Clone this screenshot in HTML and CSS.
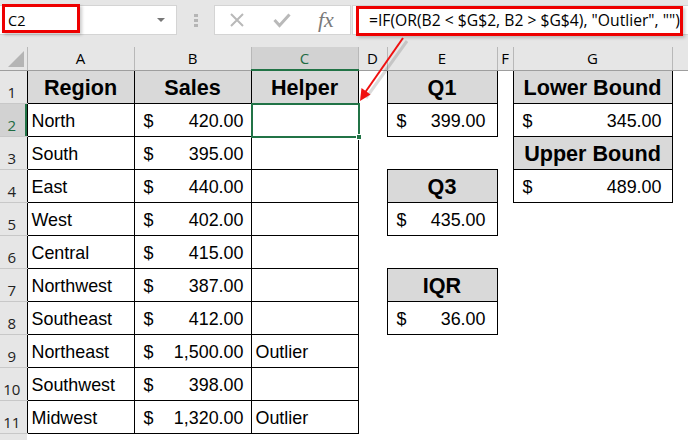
FILE: index.html
```html
<!DOCTYPE html>
<html lang="en">
<head>
<meta charset="utf-8">
<title>Outlier helper column</title>
<link rel="stylesheet" href="styles.css">
</head>
<body>
<div class="app">
  <div class="bar">
    <div class="namebox"><span class="name">C2</span><span class="caret"></span><span class="red red-name"></span></div>
    <div class="dots"><i></i><i></i><i></i></div>
    <div class="fxbox">
      <svg class="ic" width="16" height="16" viewBox="0 0 16 16"><path d="M2 2 L14 14 M14 2 L2 14" stroke="#b9b9b9" stroke-width="2" fill="none"/></svg>
      <svg class="ic" width="18" height="16" viewBox="0 0 18 16"><path d="M1.500 8 L6.500 13.500 L16.500 2.500" stroke="#b9b9b9" stroke-width="3" fill="none"/></svg>
      <span class="fx">fx</span>
    </div>
    <div class="formula"><span class="ftext">=IF(OR(B2 &lt; $G$2, B2 &gt; $G$4), "Outlier", "")</span><span class="red red-formula"></span></div>
  </div>
  <table class="sheet">
    <colgroup><col class="w-r"><col class="w-a"><col class="w-b"><col class="w-c"><col class="w-d"><col class="w-e"><col class="w-f"><col class="w-g"><col></colgroup>
    <thead>
      <tr class="chead"><th class="corner"><span class="tri"></span></th><th>A</th><th>B</th><th class="active">C</th><th>D</th><th>E</th><th>F</th><th>G</th><th></th></tr>
    </thead>
    <tbody>
      <tr><th class="rh">1</th><td class="hd">Region</td><td class="hd">Sales</td><td class="hd">Helper</td><td></td><td class="hd">Q1</td><td></td><td class="hd">Lower Bound</td><td></td></tr>
      <tr><th class="rh on">2</th><td class="tx">North</td><td class="tx m-b"><span class="money"><span>$</span><span>420.00</span></span></td><td class="tx sel-cell"><span class="sel"><span class="handle"></span></span></td><td></td><td class="tx m-e"><span class="money"><span>$</span><span>399.00</span></span></td><td></td><td class="tx m-g"><span class="money"><span>$</span><span>345.00</span></span></td><td></td></tr>
      <tr><th class="rh">3</th><td class="tx">South</td><td class="tx m-b"><span class="money"><span>$</span><span>395.00</span></span></td><td class="tx"></td><td></td><td></td><td></td><td class="hd">Upper Bound</td><td></td></tr>
      <tr><th class="rh">4</th><td class="tx">East</td><td class="tx m-b"><span class="money"><span>$</span><span>440.00</span></span></td><td class="tx"></td><td></td><td class="hd">Q3</td><td></td><td class="tx m-g"><span class="money"><span>$</span><span>489.00</span></span></td><td></td></tr>
      <tr><th class="rh">5</th><td class="tx">West</td><td class="tx m-b"><span class="money"><span>$</span><span>402.00</span></span></td><td class="tx"></td><td></td><td class="tx m-e"><span class="money"><span>$</span><span>435.00</span></span></td><td></td><td></td><td></td></tr>
      <tr><th class="rh">6</th><td class="tx">Central</td><td class="tx m-b"><span class="money"><span>$</span><span>415.00</span></span></td><td class="tx"></td><td></td><td></td><td></td><td></td><td></td></tr>
      <tr><th class="rh">7</th><td class="tx">Northwest</td><td class="tx m-b"><span class="money"><span>$</span><span>387.00</span></span></td><td class="tx"></td><td></td><td class="hd">IQR</td><td></td><td></td><td></td></tr>
      <tr><th class="rh">8</th><td class="tx">Southeast</td><td class="tx m-b"><span class="money"><span>$</span><span>412.00</span></span></td><td class="tx"></td><td></td><td class="tx m-e"><span class="money"><span>$</span><span>36.00</span></span></td><td></td><td></td><td></td></tr>
      <tr><th class="rh">9</th><td class="tx">Northeast</td><td class="tx m-b"><span class="money"><span>$</span><span>1,500.00</span></span></td><td class="tx">Outlier</td><td></td><td></td><td></td><td></td><td></td></tr>
      <tr><th class="rh">10</th><td class="tx">Southwest</td><td class="tx m-b"><span class="money"><span>$</span><span>398.00</span></span></td><td class="tx"></td><td></td><td></td><td></td><td></td><td></td></tr>
      <tr><th class="rh">11</th><td class="tx">Midwest</td><td class="tx m-b"><span class="money"><span>$</span><span>1,320.00</span></span></td><td class="tx">Outlier</td><td></td><td></td><td></td><td></td><td></td></tr>
      <tr class="last"><th class="rh"></th><td></td><td></td><td></td><td></td><td></td><td></td><td></td><td></td></tr>
    </tbody>
  </table>
  <svg class="arrow" width="688" height="440" viewBox="0 0 688 440">
    <path d="M405 39 L364 96" stroke="#000" stroke-opacity=".14" stroke-width="3" fill="none" transform="translate(2 2)"/>
    <path d="M403 38 L364 94" stroke="#f01010" stroke-width="2" fill="none"/>
    <path d="M360 101 L361.500 88 L370.500 94.500 Z" fill="#f01010"/>
  </svg>
</div>
</body>
</html>
```
FILE: styles.css
```css
* { box-sizing: border-box; }
html, body { margin: 0; padding: 0; }
body { width: 688px; height: 440px; overflow: hidden; background: #e6e6e6; }
.app { position: relative; width: 688px; height: 440px; overflow: hidden; }

.bar { height: 47px; display: flex; align-items: flex-start; padding-top: 5px; background: #e6e6e6; }
.namebox { position: relative; width: 177px; height: 30px; background: #fff; border: 1px solid #d4d4d4; border-left: 0; display: flex; align-items: center; justify-content: space-between; padding: 0 11px 0 8px; }
.name { font: 14.500px "Open Sans", sans-serif; color: #000; }
.caret { width: 0; height: 0; border-left: 4px solid transparent; border-right: 4px solid transparent; border-top: 4px solid #777; }
.dots { width: 37px; display: flex; flex-direction: column; align-items: center; gap: 2px; padding-top: 9px; }
.dots i { width: 4px; height: 3px; background: #b5b5b5; }
.fxbox { width: 137px; height: 30px; background: #fff; border: 1px solid #d4d4d4; display: flex; align-items: center; padding-left: 14px; }
.ic { flex: none; }
.ic + .ic { margin-left: 28px; }
.fx { font: italic 22px "Liberation Serif", serif; color: #7a7a7a; margin-left: 27px; }
.formula { position: relative; flex: 1; height: 30px; margin-left: 1px; background: #fff; border: 1px solid #d4d4d4; border-right: 0; display: flex; align-items: center; padding-left: 16px; white-space: nowrap; }
.ftext { font: 15.700px "Open Sans", sans-serif; color: #000; }
.red { position: absolute; border: 3px solid #ee0000; box-shadow: 2px 2px 3px rgba(0,0,0,.2); }
.red-name { left: 2px; top: -2px; width: 78px; height: 29px; }
.red-formula { left: 3px; top: 0; width: 327px; height: 30px; }

.sheet { border-collapse: collapse; table-layout: fixed; width: 688px; background: #fff; font-family: "Liberation Sans", Arial, sans-serif; }
.w-r { width: 27px; } .w-a { width: 107px; } .w-b { width: 117px; } .w-c { width: 107px; } .w-d { width: 29px; } .w-e { width: 110px; } .w-f { width: 16px; } .w-g { width: 159px; }
.chead th { height: 23px; padding: 0; background: #e6e6e6; border-right: 1px solid #b8b8b8; border-bottom: 1px solid #9e9e9e; font: 400 15px "Open Sans", sans-serif; color: #000; }
.chead th:last-child { border-right: 0; }
.chead .active { background: #d2d2d2; color: #1f6b43; border-bottom: 2px solid #217346; }
.corner { position: relative; }
.tri { position: absolute; left: 8px; top: 4px; width: 0; height: 0; border-left: 16px solid transparent; border-bottom: 16px solid #b4b4b4; }

tbody tr { height: 33px; }
tbody tr.last { height: 7px; }
.rh { padding: 0 3px 0 0; background: #e6e6e6; border-bottom: 1px solid #c8c8c8; font: 400 15px "Open Sans", sans-serif; color: #222; text-align: center; vertical-align: bottom; line-height: 22px; }
.rh.on { background: #d2d2d2; color: #1f6b43; box-shadow: inset -2px 0 0 #217346; }
td { padding: 0; }
.hd { background: #d9d9d9; border: 1px solid #000; padding-top: 3px; text-align: center; font-weight: 700; font-size: 21.600px; color: #000; vertical-align: middle; }
.tx { border: 1px solid #000; padding: 4px 3px 0 4px; font-size: 17.900px; color: #000; vertical-align: middle; white-space: nowrap; }
.money { display: flex; justify-content: space-between; }
.m-b { padding: 4px 7px 0 9px; }
.m-e { padding: 4px 11px 0 9px; }
.m-g { padding: 4px 10px 0 9px; }
.sel-cell { position: relative; }
.sel { position: absolute; left: -1px; top: -1px; right: -2px; bottom: -2px; border: 2px solid #217346; }
.handle { position: absolute; right: -4px; bottom: -4px; width: 6px; height: 6px; background: #217346; border: 1px solid #fff; }
.arrow { position: absolute; left: 0; top: 0; pointer-events: none; }
```
